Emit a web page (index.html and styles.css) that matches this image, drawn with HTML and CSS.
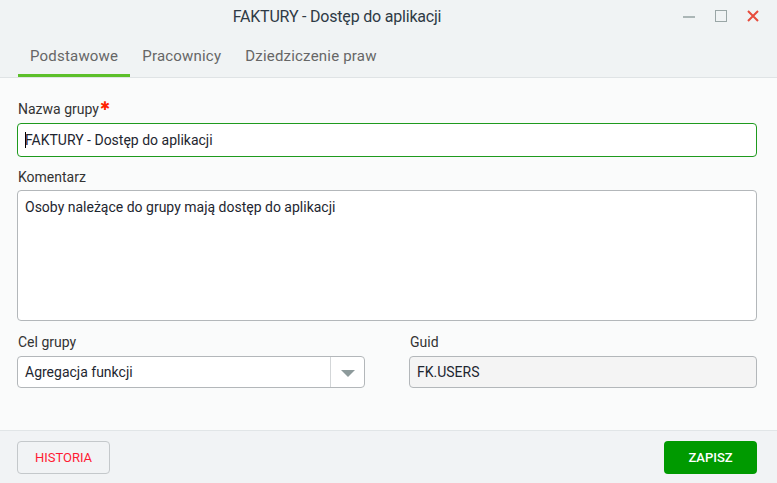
FILE: index.html
```html
<!DOCTYPE html>
<html lang="pl">
<head>
<meta charset="UTF-8">
<title>FAKTURY - Dostęp do aplikacji</title>
<link rel="stylesheet" href="styles.css">
</head>
<body>

<div class="window">
    <div class="titlebar">
        <div class="title">FAKTURY - Dostęp do aplikacji</div>
        <div class="controls">
            <svg width="14" height="14" viewBox="0 0 14 14"><path d="M1 8h12" stroke="#9aa6a6" stroke-width="1.6"/></svg>
            <svg width="14" height="14" viewBox="0 0 14 14"><rect x="1.5" y="1.5" width="11" height="11" fill="none" stroke="#9aa6a6" stroke-width="1"/></svg>
            <svg width="14" height="14" viewBox="0 0 14 14"><path d="M2 2L12 12M12 2L2 12" stroke="#e74c3c" stroke-width="2"/></svg>
        </div>
    </div>

    <div class="tabs">
        <div class="tab active">Podstawowe</div>
        <div class="tab">Pracownicy</div>
        <div class="tab">Dziedziczenie praw</div>
    </div>

    <div class="content">
        <label class="lbl">Nazwa grupy<span class="req">✱</span></label>
        <div class="field focused"><span class="caret"></span>FAKTURY - Dostęp do aplikacji</div>

        <label class="lbl">Komentarz</label>
        <div class="field area">Osoby należące do grupy mają dostęp do aplikacji</div>

        <div class="row">
            <div class="col">
                <label class="lbl">Cel grupy</label>
                <div class="field select">
                    <span class="value">Agregacja funkcji</span>
                    <span class="arrow"></span>
                </div>
            </div>
            <div class="col">
                <label class="lbl">Guid</label>
                <div class="field readonly">FK.USERS</div>
            </div>
        </div>
    </div>

    <div class="footer">
        <button class="btn btn-history">HISTORIA</button>
        <button class="btn btn-save">ZAPISZ</button>
    </div>
</div>

</body>
</html>
```

FILE: styles.css
```css
body {
    margin: 0;
    font-family: Roboto, "Liberation Sans", sans-serif;
    background-color: #f0f3f4;
    color: #333;
}
.window {
    width: 777px;
    height: 483px;
    display: flex;
    flex-direction: column;
    background-color: #f0f3f4;
}
.titlebar {
    height: 32px;
    display: flex;
    align-items: center;
}
.title {
    flex: 1;
    text-align: center;
    font-size: 16px;
    letter-spacing: -0.2px;
    color: #2e3a45;
    padding-right: 6px;
}
.controls {
    width: 97px;
    display: flex;
    gap: 18px;
    padding-left: 2px;
    box-sizing: border-box;
}
.tabs {
    height: 45px;
    display: flex;
    align-items: flex-end;
    padding-left: 18px;
    border-bottom: 1px solid #dfe3e5;
}
.tab {
    font-size: 15px;
    letter-spacing: 0.2px;
    color: #666;
    padding: 0 12px 9px 12px;
    border-bottom: 3px solid transparent;
}
.tab.active {
    border-bottom-color: #5cbf2a;
}
.content {
    flex: 1;
    background-color: #fafbfb;
    padding: 23px 20px 0 17px;
    border-bottom: 1px solid #e1e5e7;
}
.lbl {
    display: block;
    font-size: 14px;
    color: #333;
    margin-bottom: 6px;
    padding-left: 1px;
}
.req {
    color: #ff2200;
    font-size: 12px;
    position: relative;
    top: -4px;
    margin-left: 1px;
}
.field {
    box-sizing: border-box;
    height: 33px;
    background-color: #fff;
    border: 1px solid #b3b7ba;
    border-radius: 4px;
    font-size: 14px;
    color: #1e2630;
    padding: 7px 7px;
    margin-bottom: 13px;
}
.field.focused {
    border-color: #1e9a1e;
    height: 34px;
    padding-top: 8px;
    margin-bottom: 12px;
}
.caret {
    display: inline-block;
    width: 1px;
    height: 16px;
    background: #000;
    vertical-align: -3px;
    margin-right: -1px;
}
.field.area {
    height: 131px;
    padding-top: 8px;
    margin-top: -1px;
    margin-bottom: 13px;
}
.row {
    display: flex;
    gap: 44px;
}
.col {
    flex: 1;
}
.field.select {
    display: flex;
    align-items: center;
    padding: 0 0 0 7px;
    height: 32px;
}
.select .value {
    flex: 1;
}
.select .arrow {
    width: 33px;
    height: 100%;
    border-left: 1px solid #d3d6d8;
    position: relative;
}
.select .arrow::after {
    content: "";
    position: absolute;
    left: 10px;
    top: 13px;
    border-left: 7px solid transparent;
    border-right: 7px solid transparent;
    border-top: 7px solid #8d9a9b;
}
.field.readonly {
    background-color: #f4f4f4;
    height: 32px;
}
.footer {
    height: 52px;
    display: flex;
    justify-content: space-between;
    align-items: center;
    padding: 0 20px 0 17px;
    background-color: #f1f3f5;
}
.btn {
    height: 33px;
    width: 93px;
    border-radius: 4px;
    font-family: Roboto, "Liberation Sans", sans-serif;
    font-size: 13px;
    cursor: pointer;
}
.btn-history {
    background-color: #f1f3f5;
    border: 1px solid #c4c8cb;
    color: #ff1a33;
}
.btn-save {
    background-color: #009a00;
    border: none;
    color: #fff;
    font-weight: 500;
}
```
